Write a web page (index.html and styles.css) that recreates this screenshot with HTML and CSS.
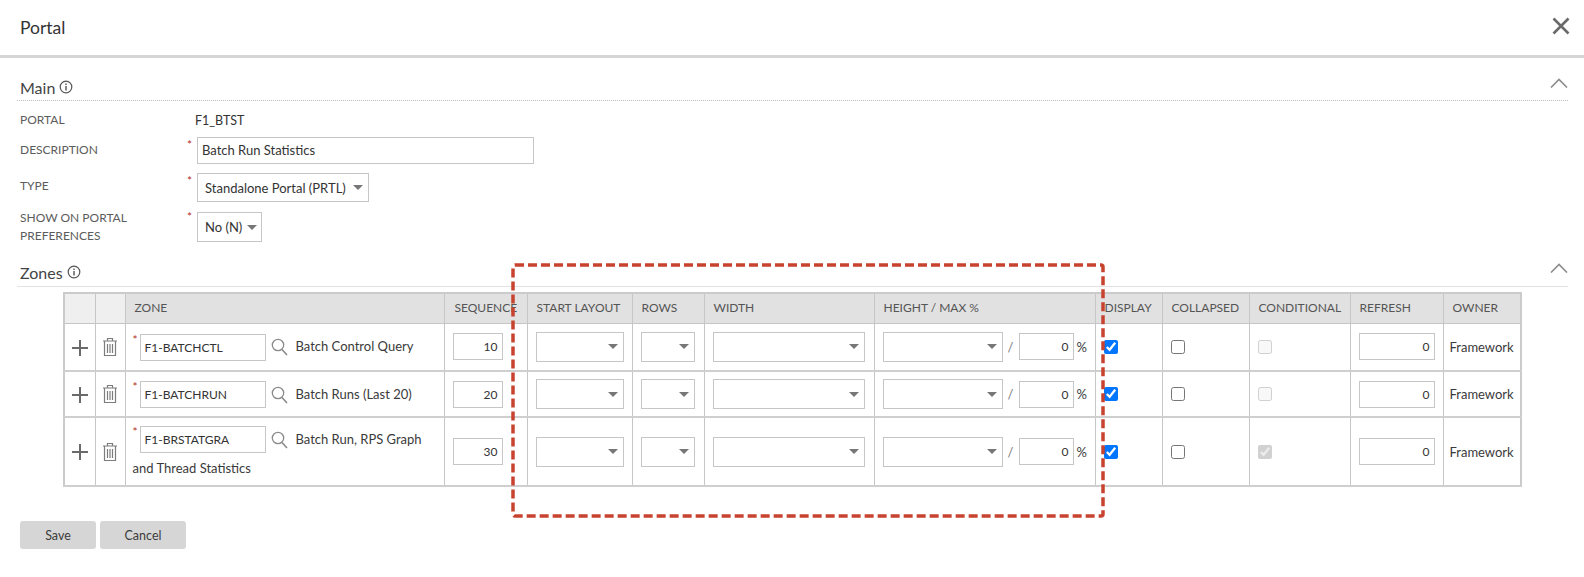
FILE: index.html
```html
<!DOCTYPE html>
<html lang="en">
<head>
<meta charset="utf-8">
<title>Portal</title>
<link rel="stylesheet" href="styles.css">
</head>
<body>
<svg width="0" height="0" class="defs">
  <symbol id="i-info" viewBox="0 0 14 14"><circle cx="7" cy="7" r="5.8" fill="none" stroke="currentColor" stroke-width="1.2"/><path d="M7 6v4.4M7 3.6v1.4" fill="none" stroke="currentColor" stroke-width="1.4"/></symbol>
  <symbol id="i-chev" viewBox="0 0 18 10"><path d="M1 9.5 9 1.5l8 8" fill="none" stroke="currentColor" stroke-width="1.6"/></symbol>
  <symbol id="i-plus" viewBox="0 0 16 16"><path d="M8 0v16M0 8h16" fill="none" stroke="currentColor" stroke-width="2"/></symbol>
  <symbol id="i-trash" viewBox="0 0 16 20"><path d="M1 4h14M5.500 4V1.500h5V4M2.500 4v14.500h11V4M5.500 7v9M8 7v9M10.500 7v9" fill="none" stroke="currentColor" stroke-width="1.2"/></symbol>
  <symbol id="i-search" viewBox="0 0 17 18"><circle cx="7" cy="7" r="5.7" fill="none" stroke="currentColor" stroke-width="1.3"/><path d="m11 11.500 5 5.500" fill="none" stroke="currentColor" stroke-width="1.6"/></symbol>
</svg>
<div class="page">
  <header class="top">
    <h1 class="title">Portal</h1>
    <svg class="close" viewBox="0 0 18 18"><path d="M1.500 1.500l15 15M16.500 1.500l-15 15" fill="none" stroke="currentColor" stroke-width="2.600"/></svg>
  </header>

  <section class="main">
    <div class="sec-head dotted">
      <h2 class="sec-title">Main</h2>
      <svg class="info"><use href="#i-info"/></svg>
      <svg class="chev"><use href="#i-chev"/></svg>
    </div>
    <div class="form">
      <div class="row r-portal"><span class="label">PORTAL</span><span class="star"></span><span class="value">F1_BTST</span></div>
      <div class="row r-desc"><span class="label">DESCRIPTION</span><span class="star">*</span><span class="field f-desc">Batch Run Statistics</span></div>
      <div class="row r-type"><span class="label">TYPE</span><span class="star">*</span><span class="select s-type">Standalone Portal (PRTL)<i class="caret"></i></span></div>
      <div class="row r-show"><span class="label">SHOW ON PORTAL<br>PREFERENCES</span><span class="star">*</span><span class="select s-no">No (N)<i class="caret"></i></span></div>
    </div>
  </section>

  <section class="zones">
    <div class="sec-head solid">
      <h2 class="sec-title">Zones</h2>
      <svg class="info"><use href="#i-info"/></svg>
      <svg class="chev"><use href="#i-chev"/></svg>
    </div>
    <table class="grid">
      <colgroup>
        <col class="c1"><col class="c2"><col class="c3"><col class="c4"><col class="c5"><col class="c6"><col class="c7"><col class="c8"><col class="c9"><col class="c10"><col class="c11"><col class="c12"><col class="c13">
      </colgroup>
      <thead>
        <tr>
          <th class="blank"></th><th class="blank"></th>
          <th>ZONE</th><th class="pad-seq">SEQUENCE</th><th>START LAYOUT</th><th>ROWS</th><th>WIDTH</th><th>HEIGHT / MAX %</th><th>DISPLAY</th><th>COLLAPSED</th><th>CONDITIONAL</th><th>REFRESH</th><th>OWNER</th>
        </tr>
      </thead>
      <tbody>
        <tr class="r1">
          <td class="ctr"><svg class="plus"><use href="#i-plus"/></svg></td>
          <td class="ctr"><svg class="trash"><use href="#i-trash"/></svg></td>
          <td class="zone"><span class="star-in">*</span><span class="field f-zone">F1-BATCHCTL</span><svg class="search"><use href="#i-search"/></svg><span class="zdesc">Batch Control Query</span></td>
          <td class="seq"><span class="field num f-seq">10</span></td>
          <td class="ctr"><span class="select s-start"><i class="caret"></i></span></td>
          <td class="ctr"><span class="select s-rows"><i class="caret"></i></span></td>
          <td class="ctr"><span class="select s-width"><i class="caret"></i></span></td>
          <td class="hcell"><span class="select s-height"><i class="caret"></i></span><span class="slash">/</span><span class="field num f-max">0</span><span class="pct">%</span></td>
          <td class="chk"><input type="checkbox" checked></td>
          <td class="chk"><input type="checkbox"></td>
          <td class="chk"><input type="checkbox" disabled></td>
          <td class="ctr"><span class="field num f-ref">0</span></td>
          <td class="owner">Framework</td>
        </tr>
        <tr class="r2">
          <td class="ctr"><svg class="plus"><use href="#i-plus"/></svg></td>
          <td class="ctr"><svg class="trash"><use href="#i-trash"/></svg></td>
          <td class="zone"><span class="star-in">*</span><span class="field f-zone">F1-BATCHRUN</span><svg class="search"><use href="#i-search"/></svg><span class="zdesc">Batch Runs (Last 20)</span></td>
          <td class="seq"><span class="field num f-seq">20</span></td>
          <td class="ctr"><span class="select s-start"><i class="caret"></i></span></td>
          <td class="ctr"><span class="select s-rows"><i class="caret"></i></span></td>
          <td class="ctr"><span class="select s-width"><i class="caret"></i></span></td>
          <td class="hcell"><span class="select s-height"><i class="caret"></i></span><span class="slash">/</span><span class="field num f-max">0</span><span class="pct">%</span></td>
          <td class="chk"><input type="checkbox" checked></td>
          <td class="chk"><input type="checkbox"></td>
          <td class="chk"><input type="checkbox" disabled></td>
          <td class="ctr"><span class="field num f-ref">0</span></td>
          <td class="owner">Framework</td>
        </tr>
        <tr class="r3">
          <td class="ctr"><svg class="plus"><use href="#i-plus"/></svg></td>
          <td class="ctr"><svg class="trash"><use href="#i-trash"/></svg></td>
          <td class="zone"><span class="star-in">*</span><span class="field f-zone">F1-BRSTATGRA</span><svg class="search"><use href="#i-search"/></svg><span class="zdesc">Batch Run, RPS Graph</span> <span class="zmore">and Thread Statistics</span></td>
          <td class="seq"><span class="field num f-seq">30</span></td>
          <td class="ctr"><span class="select s-start"><i class="caret"></i></span></td>
          <td class="ctr"><span class="select s-rows"><i class="caret"></i></span></td>
          <td class="ctr"><span class="select s-width"><i class="caret"></i></span></td>
          <td class="hcell"><span class="select s-height"><i class="caret"></i></span><span class="slash">/</span><span class="field num f-max">0</span><span class="pct">%</span></td>
          <td class="chk"><input type="checkbox" checked></td>
          <td class="chk"><input type="checkbox"></td>
          <td class="chk"><input type="checkbox" disabled checked></td>
          <td class="ctr"><span class="field num f-ref">0</span></td>
          <td class="owner">Framework</td>
        </tr>
      </tbody>
    </table>
    <div class="actions">
      <button class="btn b-save" type="button">Save</button>
      <button class="btn b-cancel" type="button">Cancel</button>
    </div>
  </section>

  <svg class="callout" viewBox="0 0 594 255"><rect x="2" y="2" width="590" height="251" rx="2" fill="none" stroke="#c8432f" stroke-width="3.500" stroke-dasharray="9 4"/></svg>
</div>
</body>
</html>
```

FILE: styles.css
```css
* { box-sizing: border-box; }
html, body { margin: 0; padding: 0; background: #fff; }
body { font-family: "Lato", "Noto Sans", sans-serif; font-size: 13px; color: #3a3a3a; }
.defs { position: absolute; }
.page { position: relative; width: 1584px; height: 577px; overflow: hidden; }

.top { height: 58px; border-bottom: 3px solid #d5d5d5; display: flex; align-items: center; justify-content: space-between; padding: 0 14px 1px 20px; }
.title { margin: 0; font-size: 17.5px; font-weight: 400; color: #333; }
.close { width: 18px; height: 18px; color: #6a6a6a; margin-top: -3px; }

.main { padding-top: 18px; }
.sec-head { margin: 0 16px 0 17px; padding-left: 3px; display: flex; align-items: center; gap: 4px; height: 25px; }
.sec-head.dotted { border-bottom: 1px dotted #bdbdbd; }
.sec-head.solid { border-bottom: 1px solid #e2e2e2; height: 26px; }
.sec-title { margin: 0 0 2px; font-size: 16px; font-weight: 400; color: #444; }
.info { width: 14px; height: 14px; color: #555; margin-top: -3px; }
.chev { width: 18px; height: 10px; color: #8c8c8c; margin-left: auto; margin-top: -11px; }

.form { padding: 0 0 0 20px; }
.row { display: grid; grid-template-columns: 167px 10px auto; justify-content: start; align-items: center; }
.r-portal { height: 36px; padding-top: 2px; }
.r-desc { height: 27px; }
.r-desc .label { padding-bottom: 2px; }
.r-type { margin-top: 9px; height: 29px; }
.r-type .label { padding-bottom: 4px; }
.r-show { margin-top: 7px; height: 30px; }
.label { font-size: 12px; line-height: 18px; color: #5c5c5c; }
.star { color: #b5321f; font-size: 12px; align-self: start; line-height: 10px; margin-top: 3px; }
.value { font-size: 12.5px; color: #333; margin-left: -2px; }

.field { display: inline-block; height: 27px; line-height: 25px; border: 1px solid #c6c6c6; padding: 0 4px; color: #333; background: #fff; vertical-align: middle; white-space: nowrap; }
.field.num { text-align: right; font-size: 12px; }
.select { display: inline-flex; align-items: center; justify-content: space-between; border: 1px solid #c6c6c6; padding: 0 5px 0 7px; color: #333; background: #fff; vertical-align: middle; white-space: nowrap; }
.caret { display: block; width: 0; height: 0; border-left: 5px solid transparent; border-right: 5px solid transparent; border-top: 5px solid #777; margin-left: auto; }
.f-desc { width: 337px; }
.s-type { width: 172px; height: 29px; }
.s-no { width: 65px; height: 30px; }
.s-type .caret, .s-no .caret { margin-left: 5px; }

.zones { padding-top: 22px; }
.grid { border-collapse: collapse; table-layout: fixed; width: 1458px; margin: 5px 0 0 63px; border: 2px solid #cbcbcb; }
.c1 { width: 31px; } .c2 { width: 30px; } .c3 { width: 319px; } .c4 { width: 83px; }
.c5 { width: 105px; } .c6 { width: 72px; } .c7 { width: 170px; } .c8 { width: 221px; }
.c9 { width: 67px; } .c10 { width: 87px; } .c11 { width: 101px; } .c12 { width: 93px; } .c13 { width: 78px; }
.grid th, .grid td { border: 1px solid #c6c6c6; padding: 0; }
.grid tbody tr { border-bottom: 2px solid #cfcfcf; }
.grid thead tr { height: 30px; }
.grid th { background: #e1e1e1; font-weight: 400; font-size: 12px; color: #555; text-align: left; padding: 0 0 2px 9px; white-space: nowrap; overflow: hidden; }
.grid th.blank { background: #efefef; padding: 0; }
.grid th.pad-seq { padding-left: 10px; overflow: visible; }
.r1 td { height: 48px; } .r2 td { height: 46px; } .r3 td { height: 69px; }
.ctr { text-align: center; }
.plus { width: 16px; height: 16px; color: #6a6a6a; display: inline-block; vertical-align: middle; }
.trash { width: 16px; height: 20px; color: #7c7c7c; display: inline-block; vertical-align: middle; }
.grid td.zone { padding: 10px 6px 2px 7px; vertical-align: top; line-height: 22px; }
.r2 .zone.zone { padding-top: 9px; }
.r3 .zone.zone { padding-top: 8px; }
.star-in { color: #b5321f; font-size: 12px; display: inline-block; width: 7px; vertical-align: top; line-height: 12px; }
.f-zone { width: 126px; font-size: 12px; padding: 0 3px 0 4px; }
.search { width: 17px; height: 18px; color: #8a8a8a; margin-left: 5px; vertical-align: middle; }
.zdesc { margin-left: 8px; vertical-align: middle; line-height: 20px; padding-bottom: 2px; display: inline-block; }
.zmore { display: block; margin-top: 4px; }
.grid td.seq { padding-left: 8px; }
.f-seq { width: 50px; }
.s-start { width: 88px; height: 30px; }
.s-rows { width: 54px; height: 30px; }
.s-width { width: 152px; height: 30px; }
.s-height { width: 120px; height: 30px; }
.grid td.hcell { padding-left: 8px; white-space: nowrap; }
.slash { display: inline-block; width: 16px; text-align: center; color: #777; vertical-align: middle; }
.f-max { width: 55px; }
.pct { margin-left: 3px; vertical-align: middle; }
.grid td.chk { padding-left: 8px; }
.chk input { width: 14px; height: 14px; margin: 0; vertical-align: middle; display: block; }
.f-ref { width: 76px; }
.grid td.owner { padding-left: 6px; white-space: nowrap; }

.actions { display: flex; gap: 4px; padding: 34px 0 0 20px; }
.btn { height: 28px; border: 0; border-radius: 3px; background: #d6d6d6; font: inherit; font-size: 12.5px; color: #3c3c3c; padding: 0; }
.b-save { width: 76px; }
.b-cancel { width: 86px; }

.callout { position: absolute; left: 511px; top: 263px; width: 594px; height: 255px; }
```
